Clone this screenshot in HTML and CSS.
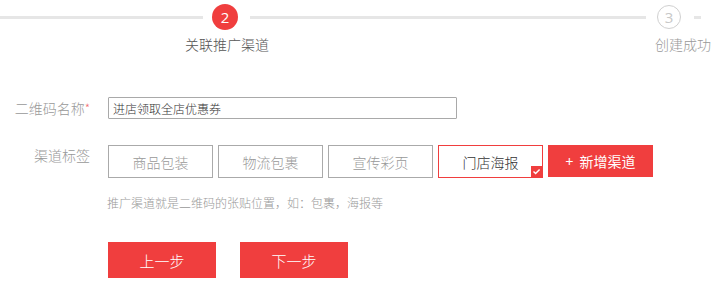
FILE: index.html
```html
<!DOCTYPE html>
<html lang="zh">
<head>
<meta charset="utf-8">
<title>关联推广渠道</title>
<link rel="stylesheet" href="styles.css">
</head>
<body>
<div class="steps">
  <div class="track">
    <span class="line line-a"></span>
    <span class="dot dot-active">2</span>
    <span class="line line-b"></span>
    <span class="dot dot-todo">3</span>
    <span class="line line-c"></span>
  </div>
  <div class="labels">
    <span class="label label-active">关联推广渠道</span>
    <span class="label label-todo">创建成功</span>
  </div>
</div>

<div class="form">
  <div class="row row-name">
    <div class="field-label">二维码名称<span class="req">*</span></div>
    <input class="text-input" type="text" value="进店领取全店优惠券">
  </div>
  <div class="row row-tags">
    <div class="field-label field-label-top">渠道标签</div>
    <div class="tags">
      <span class="tag">商品包装</span>
      <span class="tag">物流包裹</span>
      <span class="tag">宣传彩页</span>
      <span class="tag tag-on">门店海报<svg class="tick" width="11" height="11" viewBox="0 0 11 11"><rect width="11" height="11" fill="#f03e3e"/><path d="M2.5 5.6 L4.6 7.6 L8.6 3.4" fill="none" stroke="#fff" stroke-width="1.4"/></svg></span>
      <span class="tag tag-add"><span class="plus">+</span>新增渠道</span>
    </div>
  </div>
  <div class="hint">推广渠道就是二维码的张贴位置，如：包裹，海报等</div>
  <div class="actions">
    <span class="btn">上一步</span>
    <span class="btn">下一步</span>
  </div>
</div>
</body>
</html>
```
FILE: styles.css
```css
html, body {
  margin: 0;
  padding: 0;
  background: #fff;
}
body {
  font-family: "Noto Sans CJK SC", "Noto Sans", sans-serif;
  font-weight: 300;
  color: #333;
  width: 719px;
  height: 301px;
  overflow: hidden;
}
.steps {
  height: 54px;
}
.track {
  display: flex;
  align-items: center;
  height: 34px;
}
.line {
  height: 3px;
  background: #e6e6e6;
}
.line-a { width: 203px; }
.line-b { width: 396px; margin: 0 11px 0 12px; }
.line-c { width: 7px; margin-left: 13px; }
.dot {
  box-sizing: border-box;
  width: 26px;
  height: 26px;
  border-radius: 50%;
  display: flex;
  align-items: center;
  justify-content: center;
  font-size: 15px;
  font-family: "Open Sans", "Noto Sans", sans-serif;
  font-weight: 400;
}
.dot-active {
  background: #f03e3e;
  color: #fff;
  margin-left: 9px;
}
.dot-todo {
  width: 24px;
  height: 24px;
  border: 1px solid #d0d0d0;
  color: #c8c8c8;
}
.labels {
  display: flex;
  height: 20px;
  line-height: 20px;
  font-size: 14px;
}
.label-active {
  color: #555;
  margin-left: 185px;
}
.label-todo {
  color: #999;
  margin-left: 386px;
}
.form {
  padding-top: 43px;
}
.row {
  display: flex;
}
.row-name {
  align-items: center;
  height: 22px;
}
.row-tags {
  margin-top: 26px;
  align-items: flex-start;
}
.field-label {
  width: 90px;
  margin-right: 18px;
  text-align: right;
  font-size: 14px;
  color: #999;
  line-height: 22px;
  white-space: nowrap;
}
.field-label-top {
  line-height: 20px;
}
.req {
  color: #f27070;
  font-size: 12px;
  vertical-align: top;
}
.text-input {
  box-sizing: border-box;
  width: 349px;
  height: 22px;
  margin: 0;
  padding: 0 4px;
  border: 1px solid #a9a9a9;
  border-radius: 1px;
  font-family: inherit;
  font-weight: 300;
  font-size: 12px;
  color: #333;
  outline: none;
}
.tags {
  display: flex;
  gap: 5px;
}
.tag {
  position: relative;
  box-sizing: border-box;
  width: 105px;
  height: 33px;
  border: 1px solid #aaa;
  display: flex;
  align-items: center;
  justify-content: center;
  font-size: 14px;
  color: #999;
}
.tag-on {
  border-color: #f03e3e;
  color: #333;
}
.tick {
  position: absolute;
  right: 0;
  bottom: 0;
}
.tag-add {
  background: #f03e3e;
  border-color: #f03e3e;
  color: #fff;
  height: 32px;
  font-weight: 400;
}
.plus {
  margin-right: 6px;
}
.hint {
  margin-top: 16px;
  padding-left: 107px;
  font-size: 12px;
  line-height: 18px;
  color: #999;
}
.actions {
  display: flex;
  gap: 24px;
  margin-top: 30px;
  padding-left: 108px;
}
.btn {
  width: 108px;
  height: 36px;
  background: #f03e3e;
  color: #fff;
  font-size: 15px;
  display: flex;
  align-items: center;
  justify-content: center;
}
```
